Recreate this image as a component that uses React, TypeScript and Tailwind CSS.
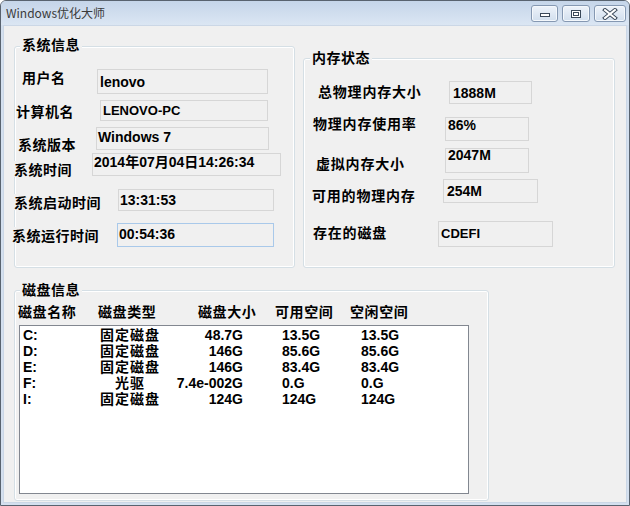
import React from 'react';

const CJK = "font-['Noto_Sans_CJK_SC',sans-serif]";
const LAT = "font-['Liberation_Sans','Noto_Sans_CJK_SC',sans-serif]";

function Label({ text, className }: { text: string; className: string }) {
  return (
    <span className={`shrink-0 bg-[#f0f0f0] text-[14px] font-bold leading-[16px] text-black ${CJK} ${className}`}>
      {text}
    </span>
  );
}

function Field({ text, className }: { text: string; className: string }) {
  return (
    <div className={`flex shrink-0 items-center bg-[#f0f0f0] font-bold leading-[16px] text-black ${LAT} ${className}`}>
      {text}
    </div>
  );
}

function Group({ title, titleClass, className, children }: { title: string; titleClass: string; className: string; children: React.ReactNode }) {
  return (
    <div className={`relative shrink-0 rounded-[3px] border border-[#d5dfe5] shadow-[inset_0_0_0_1px_#ffffff] ${className}`}>
      <span className={`absolute bg-[#f0f0f0] px-[2px] text-[14px] font-bold leading-[16px] tracking-[0.5px] text-black ${CJK} ${titleClass}`}>
        {title}
      </span>
      {children}
    </div>
  );
}

const disks = [
  { name: 'C:', type: '固定磁盘', size: '48.7G', avail: '13.5G', free: '13.5G' },
  { name: 'D:', type: '固定磁盘', size: '146G', avail: '85.6G', free: '85.6G' },
  { name: 'E:', type: '固定磁盘', size: '146G', avail: '83.4G', free: '83.4G' },
  { name: 'F:', type: '光驱', size: '7.4e-002G', avail: '0.G', free: '0.G' },
  { name: 'I:', type: '固定磁盘', size: '124G', avail: '124G', free: '124G' },
];

function CaptionButton({ w, children }: { w: string; children: React.ReactNode }) {
  return (
    <div className={`flex h-[17px] items-center justify-center rounded-[3px] border border-[#8598b2] bg-linear-to-b from-[#eef3fa] to-[#d2dfee] shadow-[inset_0_0_0_1px_#f4f8fc] ${w}`}>
      {children}
    </div>
  );
}

export default function App() {
  return (
    <div className="flex h-[506px] w-[630px] flex-col overflow-hidden rounded-t-[6px] border border-[#59636f] bg-[#d4e0ef]">
      {/* title bar */}
      <div className="flex h-[24px] shrink-0 items-start bg-linear-to-b from-[#c5d5e9] to-[#dbe6f3]">
        <span className={`ml-[5px] mt-[5px] text-[12px] leading-[14px] text-[#3a3a3a] ${CJK}`}>Windows优化大师</span>
        <div className="ml-auto mr-[3px] mt-[4px] flex gap-[4px]">
          <CaptionButton w="w-[27px]">
            <svg width="12" height="8" viewBox="0 0 12 8">
              <rect x="1.5" y="3.5" width="9" height="3" fill="#fff" stroke="#3a4859" />
            </svg>
          </CaptionButton>
          <CaptionButton w="w-[28px]">
            <svg width="12" height="10" viewBox="0 0 12 10">
              <rect x="1.5" y="1.5" width="9" height="7" fill="#fff" stroke="#3a4859" />
              <rect x="3.5" y="3.5" width="5" height="3" fill="none" stroke="#3a4859" />
            </svg>
          </CaptionButton>
          <CaptionButton w="w-[32px]">
            <svg width="16" height="12" viewBox="0 0 16 12">
              <path d="M3 2 L13 10 M13 2 L3 10" stroke="#3a4859" strokeWidth="4" strokeLinecap="square" />
              <path d="M3 2 L13 10 M13 2 L3 10" stroke="#fff" strokeWidth="2" strokeLinecap="square" />
            </svg>
          </CaptionButton>
        </div>
      </div>

      {/* client area */}
      <div className="mx-[2px] mb-[2px] flex flex-1 flex-col border border-[#cbd7e6] bg-[#f0f0f0]">
        <div className="ml-[10px] mt-[20px] flex items-start">
          <Group title="系统信息" titleClass="left-[5px] top-[-11px]" className="h-[222px] w-[281px]">
            <div className="flex flex-col pt-[22px] tracking-[0.5px]">
              <div className="flex h-[31px] items-start">
                <Label text="用户名" className="ml-[7px] w-[75px]" />
                <Field text="lenovo" className="h-[25px] w-[171px] border border-[#d6d6d6] pl-[2px] text-[14px] tracking-normal" />
              </div>
              <div className="flex h-[27px] items-start">
                <Label text="计算机名" className="ml-[1px] mt-[3px] w-[84px]" />
                <Field text="LENOVO-PC" className="h-[21px] w-[168px] border border-[#d6d6d6] pl-[2px] text-[13px] tracking-normal" />
              </div>
              <div className="flex h-[26px] items-start">
                <Label text="系统版本" className="ml-[3px] mt-[9px] w-[78px]" />
                <Field text="Windows 7" className="h-[23px] w-[173px] border border-[#d6d6d6] pb-[4px] pl-[1px] text-[14px] tracking-normal" />
              </div>
              <div className="flex h-[36px] items-start">
                <Label text="系统时间" className="-ml-[1px] mt-[8px] w-[78px]" />
                <Field text="2014年07月04日14:26:34" className="h-[23px] w-[189px] border border-[#d6d6d6] pb-[5px] pl-[1px] text-[14px] tracking-normal" />
              </div>
              <div className="flex h-[34px] items-start">
                <Label text="系统启动时间" className="-ml-[1px] mt-[5px] w-[104px]" />
                <Field text="13:31:53" className="h-[22px] w-[156px] border border-[#d6d6d6] pl-[1px] text-[14px] tracking-normal" />
              </div>
              <div className="flex items-start">
                <Label text="系统运行时间" className="-ml-[3px] mt-[4px] w-[105px]" />
                <Field text="00:54:36" className="h-[24px] w-[157px] border border-[#a9c9ea] pb-[3px] pl-[1px] text-[14px] tracking-normal" />
              </div>
            </div>
          </Group>

          <Group title="内存状态" titleClass="left-[6px] top-[-10px]" className="ml-[8px] mt-[12px] h-[210px] w-[312px]">
            <div className="flex flex-col pt-[22px] tracking-[0.8px]">
              <div className="flex h-[36px] items-start">
                <Label text="总物理内存大小" className="ml-[14px] mt-[2px] w-[131px]" />
                <Field text="1888M" className="h-[23px] w-[83px] border border-[#d6d6d6] pl-[3px] text-[14px] tracking-normal" />
              </div>
              <div className="flex h-[31px] items-start">
                <Label text="物理内存使用率" className="ml-[9px] -mt-[2px] w-[132px]" />
                <Field text="86%" className="h-[24px] w-[84px] border border-[#d6d6d6] pb-[9px] pl-[2px] text-[14px] tracking-normal" />
              </div>
              <div className="flex h-[31px] items-start">
                <Label text="虚拟内存大小" className="ml-[12px] mt-[7px] w-[129px]" />
                <Field text="2047M" className="h-[25px] w-[84px] border border-[#d6d6d6] pb-[12px] pl-[2px] text-[14px] tracking-normal" />
              </div>
              <div className="flex h-[42px] items-start">
                <Label text="可用的物理内存" className="ml-[8px] mt-[8px] w-[131px]" />
                <Field text="254M" className="h-[24px] w-[95px] border border-[#d6d6d6] pl-[3px] text-[14px] tracking-normal" />
              </div>
              <div className="flex items-start">
                <Label text="存在的磁盘" className="ml-[9px] mt-[3px] w-[125px]" />
                <Field text="CDEFI" className="h-[26px] w-[115px] border border-[#d6d6d6] pl-[2px] text-[13px] tracking-normal" />
              </div>
            </div>
          </Group>
        </div>

        <Group title="磁盘信息" titleClass="left-[5px] top-[-10px]" className="ml-[10px] mt-[22px] h-[211px] w-[475px]">
          <div className="flex flex-col pt-[12px]">
            <div className="ml-[3px] flex tracking-[0.6px]">
              <Label text="磁盘名称" className="w-[80px]" />
              <Label text="磁盘类型" className="w-[100px]" />
              <Label text="磁盘大小" className="w-[77px]" />
              <Label text="可用空间" className="w-[75px]" />
              <Label text="空闲空间" className="" />
            </div>
            <div className="ml-[4px] mt-[6px] h-[169px] w-[450px] border border-[#828790] bg-white pt-[1px]">
              {disks.map((d) => (
                <div key={d.name} className={`flex h-[16px] text-[14px] font-bold leading-[16px] text-black ${LAT}`}>
                  <span className="w-[77px] shrink-0 pl-[3px]">{d.name}</span>
                  <span className="w-[66px] shrink-0 text-center tracking-[1px]">{d.type}</span>
                  <span className="w-[80px] shrink-0 text-right">{d.size}</span>
                  <span className="w-[118px] shrink-0 pl-[39px]">{d.avail}</span>
                  <span>{d.free}</span>
                </div>
              ))}
            </div>
          </div>
        </Group>
      </div>
    </div>
  );
}
